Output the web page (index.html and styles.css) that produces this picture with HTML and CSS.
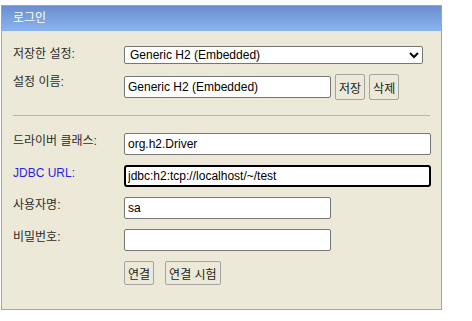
FILE: index.html
```html
<!DOCTYPE html>
<html lang="ko">

<head>
  <meta charset="UTF-8">
  <meta name="viewport" content="width=device-width, initial-scale=1.0">
  <title>H2 Console</title>
  <link rel="stylesheet" href="styles.css">
</head>

<body>
  <form class="login" onsubmit="return false">
    <div class="login-head">로그인</div>

    <div class="login-body">
      <div class="row row-select">
        <label class="label">저장한 설정:</label>
        <div class="controls">
          <select class="setting-select">
            <option>Generic H2 (Embedded)</option>
            <option>Generic H2 (Server)</option>
          </select>
        </div>
      </div>

      <div class="row row-name">
        <label class="label">설정 이름:</label>
        <div class="controls">
          <input type="text" class="field short" value="Generic H2 (Embedded)">
          <button type="button" class="btn">저장</button>
          <button type="button" class="btn">삭제</button>
        </div>
      </div>

      <hr class="divider">

      <div class="row">
        <label class="label">드라이버 클래스:</label>
        <div class="controls">
          <input type="text" class="field long" value="org.h2.Driver">
        </div>
      </div>

      <div class="row">
        <label class="label url">JDBC URL:</label>
        <div class="controls">
          <input type="text" class="field long focused" value="jdbc:h2:tcp://localhost/~/test">
        </div>
      </div>

      <div class="row">
        <label class="label">사용자명:</label>
        <div class="controls">
          <input type="text" class="field short" value="sa">
        </div>
      </div>

      <div class="row">
        <label class="label">비밀번호:</label>
        <div class="controls">
          <input type="password" class="field short" value="">
        </div>
      </div>

      <div class="row row-actions">
        <span class="label"></span>
        <div class="controls actions">
          <button type="submit" class="btn btn-low">연결</button>
          <button type="button" class="btn btn-low">연결 시험</button>
        </div>
      </div>
    </div>
  </form>
</body>

</html>
```

FILE: styles.css
```css
body {
  margin: 0;
  font-family: "Liberation Sans", "Noto Sans CJK KR", sans-serif;
  font-size: 12px;
  color: #222;
  background: #fff;
}

.login {
  width: 439px;
  margin: 5px 0 0 1px;
  background-color: #ece9d8;
  border: 1px solid #a8a69a;
}

.login-head {
  height: 25px;
  line-height: 25px;
  padding-left: 11px;
  color: #fff;
  font-size: 12px;
  background: linear-gradient(to bottom, #6a8ed0, #8ab4f0);
}

.login-body {
  padding: 15px 0 24px 11px;
}

.row {
  display: flex;
  align-items: flex-start;
  height: 22px;
  margin-bottom: 10px;
}

.row-select {
  height: 18px;
  margin-bottom: 10px;
}

.row-name {
  height: 26px;
  margin-bottom: 0;
}

.row-actions {
  height: 24px;
  margin-bottom: 0;
}

.label {
  width: 111px;
  flex-shrink: 0;
  line-height: 16px;
  color: #2b2b2b;
}

.label.url {
  color: #2a1fe6;
}

.controls {
  display: flex;
  align-items: center;
  height: 100%;
  gap: 4px;
}

.actions {
  gap: 11px;
}

.setting-select {
  width: 299px;
  height: 18px;
  font-family: inherit;
  font-size: 12px;
  color: #000;
  background: #fff;
  border: 1px solid #767676;
  border-radius: 2px;
  padding: 0 1px;
}

.field {
  box-sizing: border-box;
  height: 22px;
  padding: 0 3px;
  font-family: inherit;
  font-size: 12px;
  color: #000;
  background: #fff;
  border: 1px solid #767676;
  border-radius: 2px;
}

.field.short {
  width: 207px;
}

.field.long {
  width: 307px;
}

.field.focused {
  border: 2px solid #000;
  border-radius: 3px;
  padding: 0 2px;
}

.btn {
  box-sizing: border-box;
  height: 26px;
  padding: 0 3px;
  font-family: inherit;
  font-size: 12px;
  color: #222;
  background: #ece9d8;
  border: 1px solid #a3a3a3;
  border-radius: 2px;
}

.btn-low {
  height: 24px;
}

.divider {
  height: 0;
  margin: 15px 11px 17px 0;
  border: 0;
  border-top: 1px solid #b8b6ac;
}
```
